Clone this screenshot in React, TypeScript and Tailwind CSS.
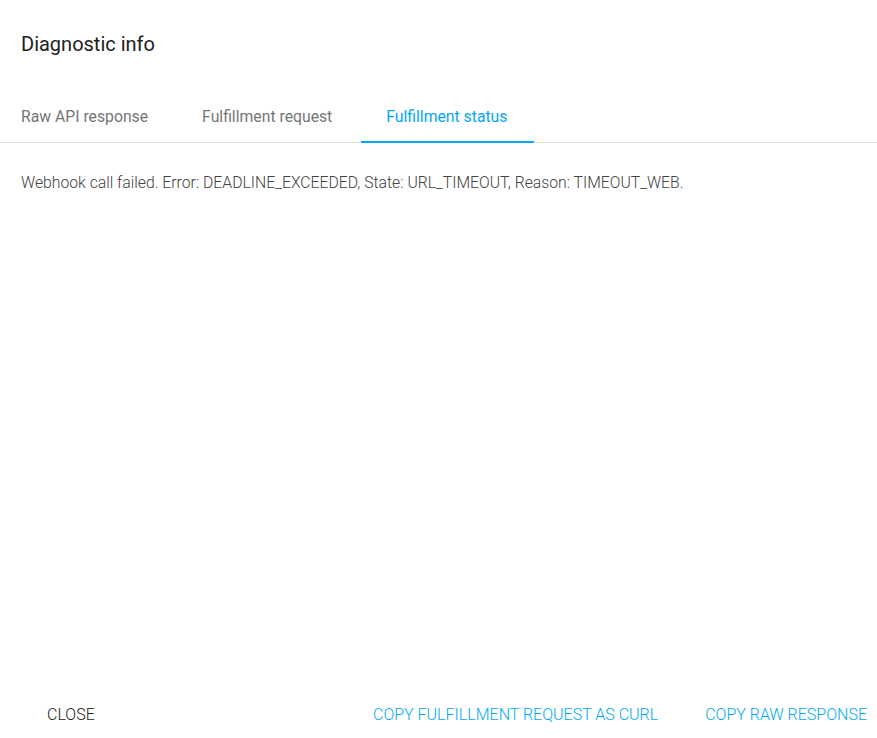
import React from "react";

export default function App() {
  return (
    <div
      className="w-[877px] h-[738px] bg-white flex flex-col"
      style={{ fontFamily: "Roboto, 'Liberation Sans', sans-serif" }}
    >
      <div className="pl-[21px] pt-[32px] h-[92px] text-[20px] leading-[24px] text-[#212121]">
        Diagnostic info
      </div>
      <div className="flex border-b border-[#e0e0e0] h-[51px] text-[15.75px] leading-[19px]">
        <div className="pl-[21px] pr-[27px] pt-[15px] text-[#757575]">Raw API response</div>
        <div className="pl-[27px] pr-[29px] pt-[15px] text-[#757575]">Fulfillment request</div>
        <div className="pl-[25px] pr-[27px] pt-[15px] text-[#03a9f4] border-b-[2px] border-[#03a9f4] -mb-px">
          Fulfillment status
        </div>
      </div>
      <div className="pl-[21px] pt-[30px] text-[15.75px] leading-[19px] font-light text-[#424242]">
        Webhook call failed. Error: DEADLINE_EXCEEDED, State: URL_TIMEOUT, Reason: TIMEOUT_WEB.
      </div>
      <div className="flex-1" />
      <div className="flex items-center h-[45px] pb-[2px] text-[16px] leading-[19px] uppercase font-light">
        <div className="pl-[47px] text-[#212121]">Close</div>
        <div className="flex-1" />
        <div className="text-[#03a9f4]">Copy fulfillment request as curl</div>
        <div className="pl-[47px] pr-[10px] text-[#03a9f4]">Copy raw response</div>
      </div>
    </div>
  );
}
